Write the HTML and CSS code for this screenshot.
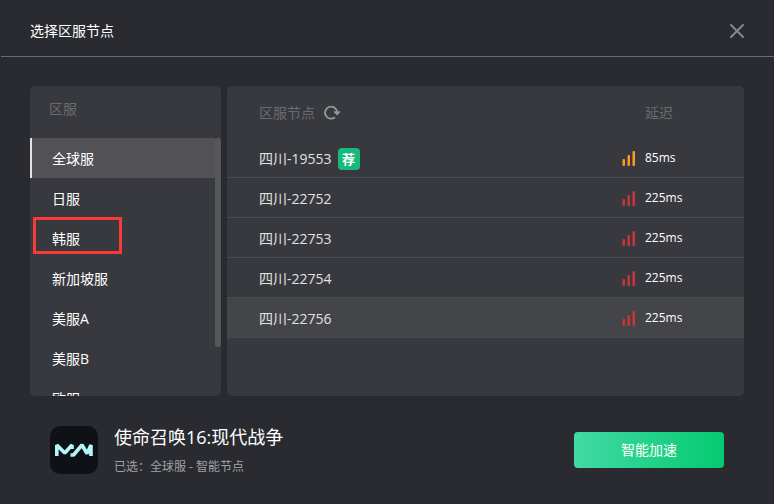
FILE: index.html
```
<!DOCTYPE html>
<html lang="zh-CN">
<head>
    <meta charset="UTF-8">
    <meta name="viewport" content="width=device-width, initial-scale=1.0">
    <title>选择区服节点</title>
    <link rel="stylesheet" href="styles.css">
</head>
<body>
    <svg class="defs" aria-hidden="true">
        <symbol id="signal" viewBox="0 0 13 16">
            <rect x="0.500" y="9" width="2.500" height="7" rx="1"/>
            <rect x="5.500" y="5" width="2.500" height="11" rx="1"/>
            <rect x="10.500" y="1" width="2.500" height="15" rx="1"/>
        </symbol>
    </svg>

    <header class="header">
        <h1 class="title">选择区服节点</h1>
        <button class="icon-btn" type="button" aria-label="关闭">
            <svg width="14" height="14" viewBox="0 0 14 14"><path d="M1 1l12 12M13 1L1 13" fill="none" stroke="#86878a" stroke-width="2" stroke-linecap="round"/></svg>
        </button>
    </header>

    <main class="main">
        <section class="panel servers">
            <h2 class="label servers-head">区服</h2>
            <div class="server-body">
                <ul class="server-list">
                    <li><button class="server active" type="button">全球服</button></li>
                    <li><button class="server" type="button">日服</button></li>
                    <li class="marked"><button class="server" type="button">韩服</button></li>
                    <li><button class="server" type="button">新加坡服</button></li>
                    <li><button class="server" type="button">美服A</button></li>
                    <li><button class="server" type="button">美服B</button></li>
                    <li><button class="server" type="button">欧服</button></li>
                </ul>
                <div class="scrollbar"></div>
            </div>
        </section>

        <section class="panel nodes">
            <table class="node-table">
                <thead>
                    <tr>
                        <th class="label">
                            <div class="cell">
                                区服节点
                                <button class="icon-btn" type="button" aria-label="刷新">
                                    <svg width="18" height="14" viewBox="0 0 18 14"><path d="M12 11.2A6 6 0 1 1 14 7.6" fill="none" stroke="#97989a" stroke-width="1.8"/><path d="M11.2 5.4L14 8.2l2.8-2.8" fill="none" stroke="#97989a" stroke-width="1.8"/></svg>
                                </button>
                            </div>
                        </th>
                        <th class="label delay-head">延迟</th>
                    </tr>
                </thead>
                <tbody>
                    <tr>
                        <td><div class="cell">四川-19553 <span class="badge">荐</span></div></td>
                        <td><div class="cell delay"><svg class="signal fair"><use href="#signal"/></svg>85ms</div></td>
                    </tr>
                    <tr>
                        <td><div class="cell">四川-22752</div></td>
                        <td><div class="cell delay"><svg class="signal"><use href="#signal"/></svg>225ms</div></td>
                    </tr>
                    <tr>
                        <td><div class="cell">四川-22753</div></td>
                        <td><div class="cell delay"><svg class="signal"><use href="#signal"/></svg>225ms</div></td>
                    </tr>
                    <tr>
                        <td><div class="cell">四川-22754</div></td>
                        <td><div class="cell delay"><svg class="signal"><use href="#signal"/></svg>225ms</div></td>
                    </tr>
                    <tr class="hovered">
                        <td><div class="cell">四川-22756</div></td>
                        <td><div class="cell delay"><svg class="signal"><use href="#signal"/></svg>225ms</div></td>
                    </tr>
                </tbody>
            </table>
        </section>
    </main>

    <footer class="footer">
        <svg class="game-icon" width="48" height="48" viewBox="0 0 48 48">
            <rect width="48" height="48" rx="10" fill="#0e1116"/>
            <g fill="none" stroke="#b5f5f7" stroke-width="3.6" stroke-linejoin="bevel">
                <path d="M6.800 30V19l8 8 7.200-8v4"/>
                <path d="M20.500 29h3L32 19l5 8.500 4-8.500v11"/>
            </g>
        </svg>
        <div class="game">
            <h2 class="game-name">使命召唤16:现代战争</h2>
            <p class="selected">已选：全球服 - 智能节点</p>
        </div>
        <button class="start" type="button">智能加速</button>
    </footer>
</body>
</html>
```

FILE: styles.css
```
* {
    box-sizing: border-box;
}
body {
    display: flex;
    flex-direction: column;
    height: 100vh;
    margin: 0;
    background: #2a2b30;
    color: #fff;
    font-family: "Open Sans", "Noto Sans CJK SC", sans-serif;
    font-size: 14px;
    line-height: 20px;
}
h1, h2, p, ul {
    margin: 0;
    padding: 0;
    font-weight: normal;
}
button {
    padding: 0;
    border: none;
    background: none;
    color: inherit;
    font: inherit;
    cursor: pointer;
}
.defs {
    display: none;
}
.icon-btn {
    display: flex;
}
.header {
    display: flex;
    align-items: center;
    justify-content: space-between;
    margin-left: 1px;
    padding: 20px 30px 15px 29px;
    border-bottom: 1px solid #6c6d70;
}
.title {
    font-size: 14px;
    line-height: 21px;
}

/* 区服与节点 */
.main {
    display: flex;
    flex: 1;
    gap: 6px;
    min-height: 0;
    padding: 29px 30px 0;
}
.panel {
    overflow: hidden;
    border-radius: 5px;
    background: #38393e;
}
.label {
    color: #6a6b6e;
    font-size: 14px;
    font-weight: normal;
    text-align: left;
}
.servers {
    display: flex;
    flex: 0 0 191px;
    flex-direction: column;
}
.servers-head {
    padding: 13px 19px 19px;
}
.server-body {
    display: flex;
    flex: 1;
    min-height: 0;
}
.server-list {
    flex: 1;
    padding-bottom: 40px;
    overflow-y: auto;
    list-style: none;
    scrollbar-width: none;
}
.scrollbar {
    width: 6px;
    height: 81%;
    border-radius: 3px;
    background: #55575b;
}
.server {
    display: block;
    width: 100%;
    height: 40px;
    padding: 1px 0 0 20px;
    border-left: 2px solid transparent;
    text-align: left;
}
.server.active {
    border-color: #e4e4e5;
    background: #525155;
}
.marked {
    position: relative;
}
.marked::after {
    content: "";
    position: absolute;
    top: -1px;
    left: 3px;
    box-sizing: border-box;
    width: 89px;
    height: 37px;
    border: 3px solid #f93a37;
    pointer-events: none;
}
.nodes {
    flex: 1;
}
.node-table {
    width: 100%;
    border-spacing: 0;
}
.node-table th {
    height: 52px;
    padding: 2px 0 0 32px;
}
.node-table .delay-head {
    width: 122px;
    padding-left: 23px;
}
.node-table td {
    height: 40px;
    padding: 2px 0 0 32px;
    border-bottom: 1px solid #4a4b4f;
    color: #e2e2e3;
}
.node-table td:last-child {
    padding: 0;
}
.hovered {
    background: #444548;
}
.cell {
    display: flex;
    align-items: center;
    gap: 8px;
}
.badge {
    width: 22px;
    margin-left: -2px;
    border-radius: 4px;
    background: #17b97f;
    color: #fff;
    font-size: 13px;
    font-weight: bold;
    line-height: 22px;
    text-align: center;
}
.delay {
    gap: 10px;
    color: #fff;
    font-size: 12px;
}
.signal {
    width: 13px;
    height: 16px;
    fill: #c73638;
}
.signal.fair {
    fill: #fb9c1c;
}

/* 底部 */
.footer {
    display: flex;
    align-items: center;
    gap: 16px;
    padding: 29px 50px;
}
.game {
    flex: 1;
}
.game-name {
    font-size: 18px;
    line-height: 24px;
}
.selected {
    margin-top: 10px;
    color: #a1a2a4;
    font-size: 12px;
    line-height: 16px;
}
.start {
    width: 150px;
    height: 36px;
    border-radius: 4px;
    background: linear-gradient(90deg, #42d9a5, #04ca6e);
}
```
